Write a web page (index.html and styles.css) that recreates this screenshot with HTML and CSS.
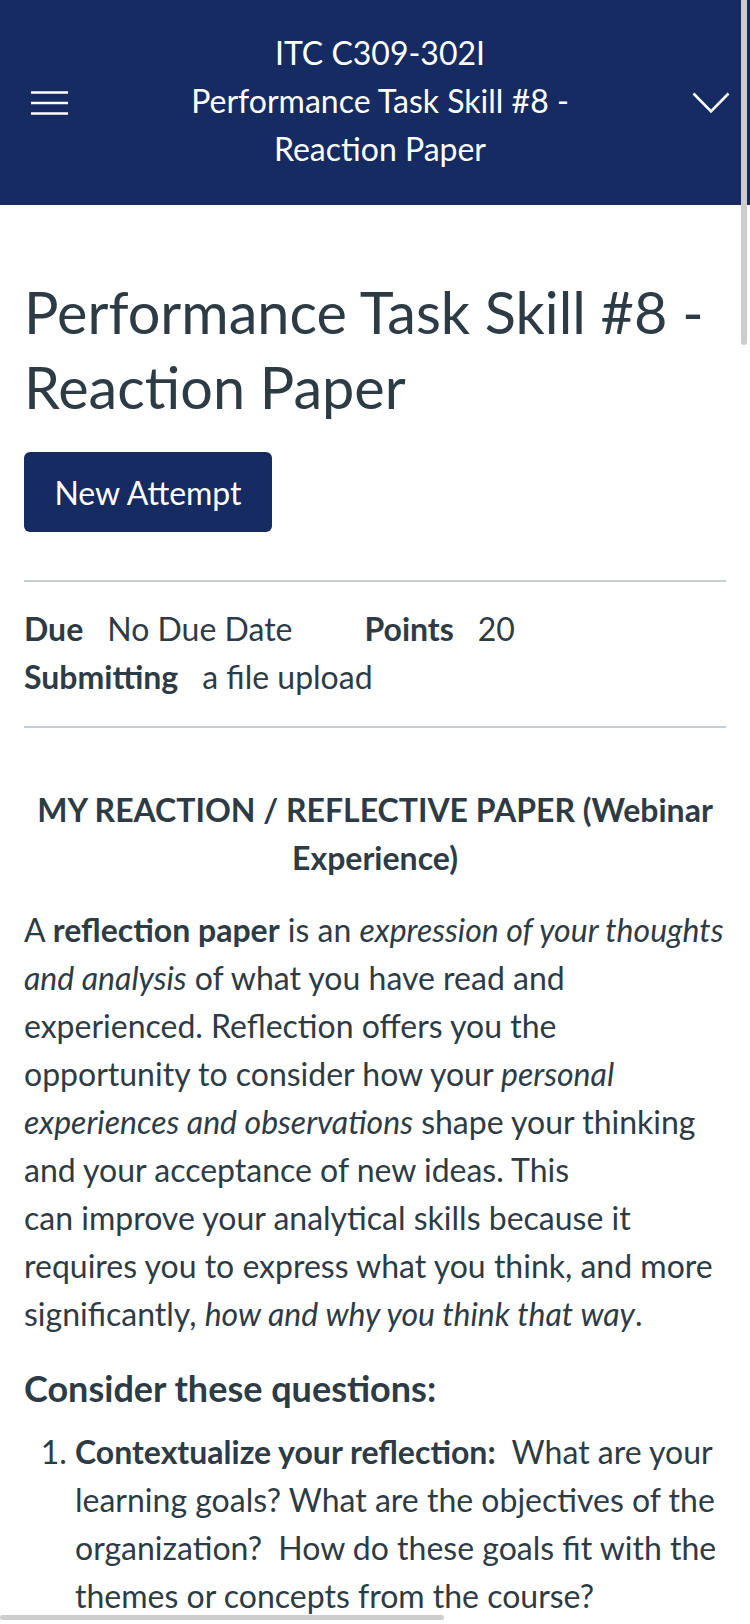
FILE: index.html
```html
<!DOCTYPE html>
<html lang="en">
<head>
<meta charset="utf-8">
<title>Performance Task Skill #8 - Reaction Paper</title>
<link rel="stylesheet" href="styles.css">
</head>
<body>
<header class="topbar">
  <button class="icon-btn menu" aria-label="Menu">
    <svg width="37" height="24" viewBox="0 0 37 24"><path d="M0 1.5H37M0 12H37M0 22.5H37" stroke="#fff" stroke-width="2.4"/></svg>
  </button>
  <div class="topbar-title">
    <div>ITC C309-302I</div>
    <div>Performance Task Skill #8 -</div>
    <div>Reaction Paper</div>
  </div>
  <button class="icon-btn chevron" aria-label="Expand">
    <svg width="38" height="22" viewBox="0 0 38 22"><path d="M1.5 1.5L19 19.5L36.5 1.5" fill="none" stroke="#fff" stroke-width="2.6"/></svg>
  </button>
</header>

<main class="content">
  <h1 class="page-title">Performance Task Skill #8 - Reaction Paper</h1>
  <button class="attempt-btn">New Attempt</button>

  <div class="details">
    <div class="details-row">
      <span class="label">Due</span><span class="value">No Due Date</span>
      <span class="label points">Points</span><span class="value">20</span>
    </div>
    <div class="details-row">
      <span class="label">Submitting</span><span class="value">a file upload</span>
    </div>
  </div>

  <section class="description">
    <p class="center-head"><strong>MY REACTION / REFLECTIVE PAPER (Webinar Experience)</strong></p>
    <p>A <strong>reflection paper</strong> is an <em>expression of your thoughts and analysis</em> of what you have read and experienced. Reflection offers you the opportunity to consider how your <em>personal experiences and observations</em> shape your thinking and your acceptance of new ideas. This<br>can improve your analytical skills because it requires you to express what you think, and more significantly, <em>how and why you think that way</em>.</p>
    <h3 class="sub-head">Consider these questions:</h3>
    <ol class="questions">
      <li><strong>Contextualize your reflection:</strong>&nbsp; What are your learning goals? What are the objectives of the organization?&nbsp; How do these goals fit with the themes or concepts from the course?</li>
    </ol>
  </section>
</main>

<div class="vscroll"></div>
<div class="hscroll"></div>
</body>
</html>
```

FILE: styles.css
```css
html, body {
  margin: 0;
  padding: 0;
}
body {
  width: 750px;
  height: 1624px;
  overflow: hidden;
  position: relative;
  background: #fff;
  font-family: Lato, "Open Sans", sans-serif;
  color: #2d3b45;
  font-size: 32px;
  line-height: 48px;
}
.topbar {
  background: #162b62;
  height: 205px;
  display: flex;
  align-items: center;
  justify-content: space-between;
  padding: 0 20px 0 31px;
  box-sizing: border-box;
  color: #fff;
}
.icon-btn {
  background: none;
  border: 0;
  padding: 0;
  display: flex;
  align-items: center;
}
.topbar-title {
  text-align: center;
  font-size: 32px;
  line-height: 48px;
  margin-top: -4px;
}
.content {
  padding: 0 24px;
}
.page-title {
  margin: 69px 0 28px;
  font-size: 57.6px;
  line-height: 75px;
  font-weight: 400;
}
.attempt-btn {
  display: block;
  width: 248px;
  height: 80px;
  background: #162b62;
  color: #fff;
  border: 0;
  border-radius: 6px;
  font-family: Lato, sans-serif;
  font-size: 32px;
  padding: 0;
  margin: 0 0 48px;
}
.details {
  border-top: 2px solid #c7cdd1;
  border-bottom: 2px solid #c7cdd1;
  padding: 23px 0 25px;
}
.details-row {
  display: flex;
}
.label {
  font-weight: 700;
  margin-right: 24px;
}
.points { margin-left: 72px; }
.description {
  padding-top: 58px;
}
.description p {
  margin: 0 0 24px;
}
.center-head {
  text-align: center;
}
.sub-head {
  font-size: 36px;
  line-height: 48px;
  font-weight: 700;
  margin: 26px 0 16px;
}
.questions {
  margin: 0;
  padding-left: 51px;
}
.vscroll {
  position: absolute;
  top: 0;
  left: 741px;
  width: 6px;
  height: 345px;
  background: #cdcdcd;
  border-radius: 0 0 3px 3px;
}
.hscroll {
  position: absolute;
  left: 0;
  top: 1615px;
  width: 444px;
  height: 5px;
  background: #cdcdcd;
  border-radius: 3px;
}
```
